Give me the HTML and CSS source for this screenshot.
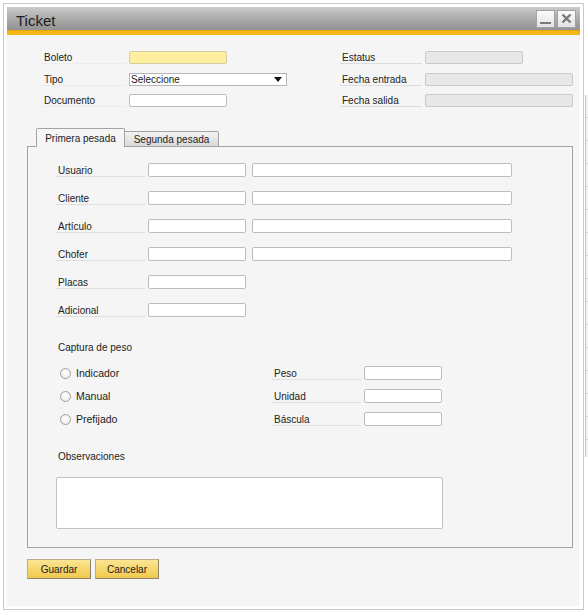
FILE: index.html
```html
<!DOCTYPE html>
<html lang="es">

<head>
    <meta charset="UTF-8">
    <meta name="viewport" content="width=device-width, initial-scale=1.0">
    <title>Ticket</title>
    <link rel="stylesheet" href="styles.css">
</head>

<body>
    <div class="window">
        <div class="titlebar">
            <span class="title">Ticket</span>
            <div class="win-btns">
                <button class="win-btn" title="Minimizar">
                    <svg width="11" height="12" viewBox="0 0 11 12"><rect x="0" y="9" width="11" height="2" fill="#7a7a7a"/></svg>
                </button>
                <button class="win-btn" title="Cerrar">
                    <svg width="11" height="11" viewBox="0 0 11 11"><path d="M1.5 1.5 L9.5 9.5 M9.5 1.5 L1.5 9.5" stroke="#7a7a7a" stroke-width="2.4"/></svg>
                </button>
            </div>
        </div>

        <div class="content">
            <!-- Datos generales -->
            <div class="header-form">
                <div class="col-left">
                    <div class="frow">
                        <label class="lbl">Boleto</label>
                        <input type="text" class="field w98 key">
                    </div>
                    <div class="frow">
                        <label class="lbl">Tipo</label>
                        <div class="select">
                            <span>Seleccione</span>
                            <svg width="8" height="5" viewBox="0 0 8 5"><polygon points="0,0 8,0 4,5" fill="#111"/></svg>
                        </div>
                    </div>
                    <div class="frow">
                        <label class="lbl">Documento</label>
                        <input type="text" class="field w98">
                    </div>
                </div>
                <div class="col-right">
                    <div class="frow">
                        <label class="lbl lbl-r">Estatus</label>
                        <input type="text" class="field w98 readonly" readonly>
                    </div>
                    <div class="frow">
                        <label class="lbl lbl-r">Fecha entrada</label>
                        <input type="text" class="field w148 readonly" readonly>
                    </div>
                    <div class="frow">
                        <label class="lbl lbl-r">Fecha salida</label>
                        <input type="text" class="field w148 readonly" readonly>
                    </div>
                </div>
            </div>

            <!-- Pestañas -->
            <div class="tabs">
                <div class="tab active">Primera pesada</div>
                <div class="tab second">Segunda pesada</div>
            </div>

            <div class="panel">
                <div class="prow">
                    <label class="lbl plbl">Usuario</label>
                    <input type="text" class="field w98">
                    <input type="text" class="field w260">
                </div>
                <div class="prow">
                    <label class="lbl plbl">Cliente</label>
                    <input type="text" class="field w98">
                    <input type="text" class="field w260">
                </div>
                <div class="prow">
                    <label class="lbl plbl">Artículo</label>
                    <input type="text" class="field w98">
                    <input type="text" class="field w260">
                </div>
                <div class="prow">
                    <label class="lbl plbl">Chofer</label>
                    <input type="text" class="field w98">
                    <input type="text" class="field w260">
                </div>
                <div class="prow">
                    <label class="lbl plbl">Placas</label>
                    <input type="text" class="field w98">
                </div>
                <div class="prow">
                    <label class="lbl plbl">Adicional</label>
                    <input type="text" class="field w98">
                </div>

                <div class="section-title">Captura de peso</div>

                <div class="weight">
                    <div class="wrow">
                        <label class="radio-opt"><span class="radio"></span>Indicador</label>
                        <label class="lbl plbl">Peso</label>
                        <input type="text" class="field w78">
                    </div>
                    <div class="wrow">
                        <label class="radio-opt"><span class="radio"></span>Manual</label>
                        <label class="lbl plbl">Unidad</label>
                        <input type="text" class="field w78">
                    </div>
                    <div class="wrow">
                        <label class="radio-opt"><span class="radio"></span>Prefijado</label>
                        <label class="lbl plbl">Báscula</label>
                        <input type="text" class="field w78">
                    </div>
                </div>

                <div class="section-title obs-title">Observaciones</div>
                <textarea class="notes"></textarea>
            </div>

            <div class="actions">
                <button class="btn">Guardar</button>
                <button class="btn">Cancelar</button>
            </div>
        </div>
    </div>

    <div class="behind"></div>
</body>

</html>
```

FILE: styles.css
```css
* {
    margin: 0;
    padding: 0;
    box-sizing: border-box;
}

body {
    font-family: 'Liberation Sans', Arial, sans-serif;
    font-size: 10px;
    color: #222;
    background-color: #fff;
    display: flex;
    align-items: flex-start;
}

/* Ventana */
.window {
    margin: 3px 0 0 3px;
    width: 581px;
    height: 607px;
    border: 1px solid #c9c9c9;
    padding: 3px;
    background-color: #fff;
    display: flex;
    flex-direction: column;
}

.titlebar {
    height: 28px;
    display: flex;
    align-items: center;
    justify-content: space-between;
    padding: 0 4px 4px 9px;
    background: linear-gradient(#cbcbcb, #adadad 45%, #909090);
    border-bottom: 4px solid #f3b716;
    box-shadow: inset 0 -1px 0 #e9a600;
}

.title {
    font-size: 15px;
    color: #1c1c1c;
    margin-top: 6px;
}

.win-btns {
    display: flex;
    gap: 2px;
    margin-top: 3px;
}

.win-btn {
    width: 19px;
    height: 18px;
    border: 1px solid #a2a2a2;
    background: linear-gradient(#fbfbfb, #e2e2e2);
    display: flex;
    align-items: center;
    justify-content: center;
    cursor: pointer;
}

.content {
    flex: 1;
    background-color: #f5f5f5;
    padding: 16px 0 0 0;
}

/* Campos */
.field {
    display: block;
    height: 13px;
    border: 1px solid #bdbdbd;
    border-radius: 2px;
    background-color: #fff;
    font-family: inherit;
    font-size: 10px;
    outline: none;
}

.key {
    background-color: #fdef9f;
    border-color: #d2cd9e;
}

.readonly {
    background-color: #e7e7e7;
    border-color: #c9c9c9;
}

.w78 { width: 78px; }
.w98 { width: 98px; }
.w148 { width: 148px; }
.w260 { width: 260px; }

.lbl {
    display: flex;
    align-items: center;
    height: 13px;
    padding: 1px 0 0 2px;
    border-bottom: 1px solid #e6e6e6;
    white-space: nowrap;
}

/* Cabecera */
.header-form {
    display: flex;
    padding-left: 35px;
}

.col-left,
.col-right {
    display: flex;
    flex-direction: column;
    gap: 8.5px;
}

.col-left {
    width: 298px;
}

.frow {
    display: flex;
    align-items: flex-end;
    height: 13px;
}

.frow .lbl {
    width: 84px;
    margin-right: 3px;
    border-bottom-color: #ececec;
}

.frow .lbl-r {
    width: 82px;
    border-bottom-color: #dcdcdc;
}

.select {
    width: 158px;
    height: 13px;
    border: 1px solid #b5b5b5;
    background-color: #fff;
    display: flex;
    align-items: center;
    justify-content: space-between;
    padding: 0 4px 0 1px;
}

/* Pestañas */
.tabs {
    display: flex;
    align-items: flex-end;
    height: 19px;
    margin: 21px 0 -1px 29px;
    position: relative;
    z-index: 1;
}

.tab {
    display: flex;
    align-items: center;
    justify-content: center;
    border: 1px solid #a3a3a3;
    font-size: 10px;
    color: #222;
}

.tab.active {
    width: 89px;
    height: 19px;
    border-bottom: none;
    border-radius: 2px 2px 0 0;
    background-color: #f5f5f5;
    padding-top: 1px;
}

.tab.second {
    width: 94px;
    height: 16px;
    border-left: none;
    border-radius: 0 2px 0 0;
    background: linear-gradient(#f3f3f3, #d9d9d9);
}

.panel {
    margin-left: 20px;
    width: 546px;
    border: 1px solid #a3a3a3;
    background-color: #f5f5f5;
    padding: 16px 0 18px 28px;
    display: flex;
    flex-direction: column;
    gap: 14px;
}

.prow {
    display: flex;
    align-items: flex-end;
    gap: 6px;
    height: 14px;
}

.prow .field,
.wrow .field {
    height: 14px;
}

.plbl {
    width: 89px;
    height: 14px;
    margin-right: -3px;
    border-bottom-color: #dedede;
}

.section-title {
    height: 14px;
    display: flex;
    align-items: center;
    padding-left: 2px;
    margin-top: 9px;
}

.weight {
    display: flex;
    flex-direction: column;
    gap: 9px;
    margin-top: -2px;
}

.wrow {
    display: flex;
    align-items: flex-end;
    height: 14px;
}

.wrow .plbl {
    margin-right: 3px;
}

.radio-opt {
    width: 216px;
    height: 14px;
    display: flex;
    align-items: center;
    gap: 5px;
    padding-left: 4px;
    font-size: 10.5px;
}

.radio {
    width: 11px;
    height: 11px;
    border: 1px solid #9d9d9d;
    border-radius: 50%;
    background: radial-gradient(circle at 50% 40%, #fff, #e9e9e9);
}

.obs-title {
    margin-top: 9px;
}

.notes {
    width: 387px;
    height: 52px;
    border: 1px solid #c2c2c2;
    border-radius: 2px;
    background-color: #fff;
    resize: none;
    outline: none;
}

/* Botones */
.actions {
    display: flex;
    gap: 4px;
    margin: 11px 0 0 20px;
}

.btn {
    width: 64px;
    height: 20px;
    font-family: inherit;
    font-size: 10px;
    color: #222;
    border: 1px solid #8d8468;
    border-top-color: #b9ae88;
    border-left-color: #b9ae88;
    background: linear-gradient(#fbe594, #f6d56a 55%, #f0c94e);
    cursor: pointer;
}

/* Ventana de fondo */
.behind {
    margin-top: 95px;
    margin-left: 1px;
    width: 3px;
    height: 362px;
    border-left: 1px solid #c8c8c8;
    background: repeating-linear-gradient(#f4f4f4 0, #f4f4f4 22px, #d6d6d6 22px, #d6d6d6 23px);
}
```
